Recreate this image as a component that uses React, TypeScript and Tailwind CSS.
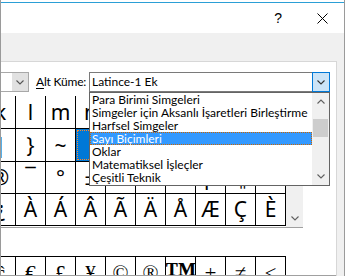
import type { ReactNode } from 'react';

const ROWS: string[][] = [
  ['k', 'l', 'm', 'n', 'o', 'p', 'q', 'r', 's', 't'],
  ['|', '}', '~', '\u00a0', '¡', '¢', '£', '¤', '¥', '¦'],
  ['®', '¯', '°', '±', '²', '³', '´', 'µ', '¶', '·'],
  ['¿', 'À', 'Á', 'Â', 'Ã', 'Ä', 'Å', 'Æ', 'Ç', 'È'],
];
const ROW_HEIGHTS = ['h-[35px] pt-[2px]', 'h-[33px]', 'h-[32px]', 'h-[32px]'];

const RECENT = ['ĉ', '€', '£', '¥', '©', '®', '™', '±', '≠', '≤'];

const SUBSETS = [
  'Para Birimi Simgeleri',
  'Simgeler için Aksanlı İşaretleri Birleştirme',
  'Harfsel Simgeler',
  'Sayı Biçimleri',
  'Oklar',
  'Matematiksel İşleçler',
  'Çeşitli Teknik',
];

function Chevron({ up = false, color = '#444' }: { up?: boolean; color?: string }) {
  return (
    <svg width="8" height="5" viewBox="0 0 8 5" className="block" aria-hidden>
      <polyline
        points={up ? '0.5,4.5 4,1 7.5,4.5' : '0.5,0.5 4,4 7.5,0.5'}
        fill="none"
        stroke={color}
        strokeWidth="1.1"
      />
    </svg>
  );
}

function Cell({ children, selected = false }: { children: ReactNode; selected?: boolean }) {
  return (
    <div
      className={`flex h-full w-[30px] shrink-0 items-center justify-center border-r border-black ${
        selected ? 'bg-[#0078d7] outline-1 -outline-offset-2 outline-dotted outline-[#ff8728]' : ''
      }`}
    >
      {children}
    </div>
  );
}

export default function App() {
  return (
    <div className="flex h-[276px] w-[345px] flex-col overflow-hidden border-x border-[#9a9a9a] bg-white font-['Lato','Noto_Sans',sans-serif] text-black">
      <div className="h-[2px] bg-white" />
      <div className="h-px bg-[#2b9fd6]" />

      {/* title bar */}
      <div className="flex h-[30px] items-center justify-end pr-[16px]">
        <span className="mr-[35px] text-[14px] leading-none font-['Liberation_Sans',sans-serif]">?</span>
        <svg width="11" height="11" viewBox="0 0 11 11" aria-hidden>
          <path d="M0.5 0.5 L10.5 10.5 M10.5 0.5 L0.5 10.5" stroke="#000" strokeWidth="1" />
        </svg>
      </div>

      <div className="flex flex-1 flex-col bg-[#f0f0f0] pt-[28px] pr-[7px]">
        <div className="relative flex flex-1 flex-col border-t border-r border-[#d7d7d7] bg-white">
          {/* combo row */}
          <div className="mt-[10px] flex h-[20px] items-stretch">
            <div className="flex w-[28px] border-y border-r border-[#a8a8a8]">
              <div className="w-[11px]" />
              <div className="flex flex-1 items-center justify-center bg-[#e1e1e1]">
                <Chevron color="#555" />
              </div>
            </div>
            <div className="ml-[7px] flex w-[53px] items-center text-[12px] leading-none tracking-[-0.2px] whitespace-nowrap">
              <span className="underline underline-offset-2">A</span>
              <span>lt Küme:</span>
            </div>
            <div className="flex w-[241px] border border-[#7a7a7a]">
              <div className="flex flex-1 items-center pl-[2px] text-[12px] leading-none">Latince-1 Ek</div>
              <div className="-my-px -mr-px flex w-[18px] items-center justify-center border border-[#0078d7] bg-[#cce4f7]">
                <Chevron color="#333" />
              </div>
            </div>
          </div>

          {/* character grid */}
          <div className="mt-[2px] flex w-[302px] flex-col border-b border-[#a0a0a0]">
            <div className="flex">
              <div className="w-[285px] overflow-hidden pb-px">
                {ROWS.map((row, r) => (
                  <div key={r} className={`-ml-[15px] flex border-b border-black ${ROW_HEIGHTS[r]}`}>
                    {row.map((ch, c) => (
                      <Cell key={c} selected={r === 1 && c === 3}>
                        <span className="font-['Noto_Sans',sans-serif] text-[21px] leading-none">{ch}</span>
                      </Cell>
                    ))}
                  </div>
                ))}
              </div>
              <div className="flex w-[17px] flex-col justify-end bg-[#f0f0f0]">
                <div className="flex h-[17px] items-center justify-center">
                  <Chevron color="#606060" />
                </div>
              </div>
            </div>
          </div>

          {/* recently used */}
          <div className="mt-[28px] h-[19px] w-[285px] overflow-hidden border-t border-black">
            <div className="-ml-[15px] flex h-[32px]">
              {RECENT.map((ch, i) => (
                <Cell key={i}>
                  <span
                    className={`leading-none font-['Liberation_Serif',serif] ${
                      ch === '™' ? 'text-[32px] font-bold' : 'text-[21px]'
                    }`}
                  >
                    {ch}
                  </span>
                </Cell>
              ))}
            </div>
          </div>
          <div className="h-px bg-[#a0a0a0]" />

          {/* open subset list */}
          <div className="absolute top-[30px] left-[88px] flex h-[94px] w-[241px] border border-[#646464] bg-white">
            <div className="flex-1">
              {SUBSETS.map((s) => {
                const active = s === 'Sayı Biçimleri';
                return (
                  <div
                    key={s}
                    className={`h-[13px] pl-[2px] text-[12px] leading-[13px] whitespace-nowrap ${
                      active ? 'bg-[#3399ff] text-white outline-1 -outline-offset-1 outline-dotted outline-[#cc6600]' : ''
                    }`}
                  >
                    {s}
                  </div>
                );
              })}
            </div>
            <div className="flex w-[17px] flex-col bg-[#f0f0f0]">
              <div className="flex h-[17px] items-center justify-center">
                <Chevron up color="#606060" />
              </div>
              <div className="mx-[1px] mt-[9px] h-[18px] bg-[#cdcdcd]" />
              <div className="flex-1" />
              <div className="flex h-[17px] items-center justify-center">
                <Chevron color="#606060" />
              </div>
            </div>
          </div>
        </div>
      </div>
    </div>
  );
}
